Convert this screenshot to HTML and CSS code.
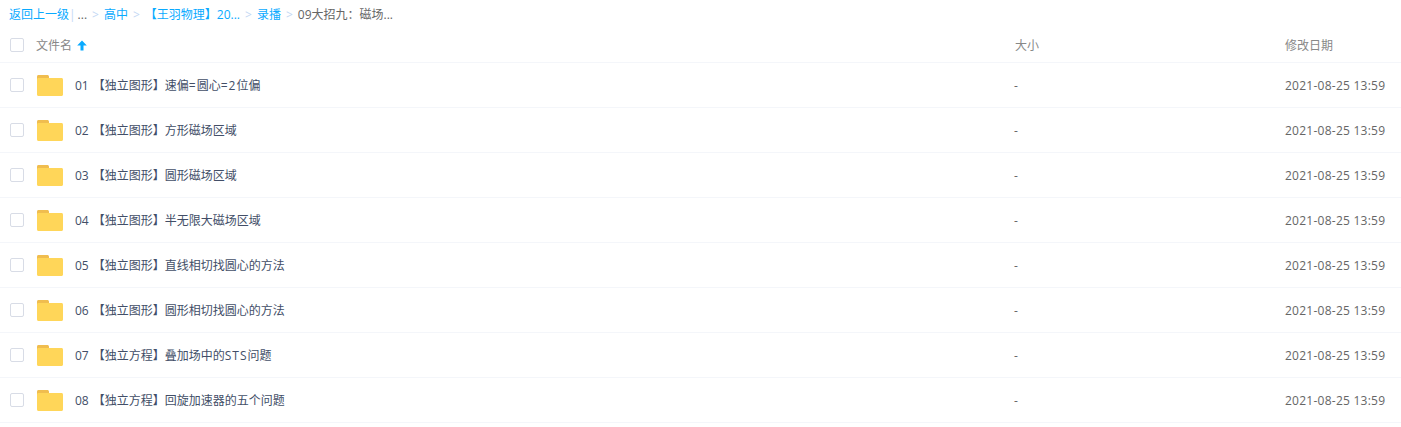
FILE: index.html

```html
<!DOCTYPE html>
<html lang="zh-CN">
<head>
  <meta charset="UTF-8" />
  <title>文件列表</title>
  <link rel="stylesheet" href="styles.css">
</head>
<body>

  <!-- 路径 -->
  <div class="crumbs">
    <a>返回上一级</a>
    <span class="crumb-bar">|</span>
    <span class="crumb-text">...</span>
    <span class="crumb-sep">&gt;</span>
    <a>高中</a>
    <span class="crumb-sep">&gt;</span>
    <a>【王羽物理】20...</a>
    <span class="crumb-sep">&gt;</span>
    <a>录播</a>
    <span class="crumb-sep">&gt;</span>
    <span class="crumb-text">09大招九：磁场...</span>
  </div>

  <!-- 表头 -->
  <div class="row head">
    <span class="check"></span>
    <div class="col-name">文件名
      <svg class="sort" width="10" height="11" viewBox="0 0 10 11"><path d="M5 .5 9.800 5.500H6.500V10.500H3.500V5.500H.2z" fill="#09aaff"/></svg>
    </div>
    <div class="col-size">大小</div>
    <div class="col-date">修改日期</div>
  </div>

  <!-- 文件行 -->
  <div class="row">
    <span class="check"></span>
    <svg class="folder" width="26" height="21" viewBox="0 0 26 21"><use href="#folder-shape"/></svg>
    <div class="col-name file-name"><span class="num">01</span>【独立图形】速偏<span class="wide">=</span>圆心<span class="wide">=2</span>位偏</div>
    <div class="col-size">-</div>
    <div class="col-date">2021-08-25 13:59</div>
  </div>
  <div class="row">
    <span class="check"></span>
    <svg class="folder" width="26" height="21" viewBox="0 0 26 21"><use href="#folder-shape"/></svg>
    <div class="col-name file-name"><span class="num">02</span>【独立图形】方形磁场区域</div>
    <div class="col-size">-</div>
    <div class="col-date">2021-08-25 13:59</div>
  </div>
  <div class="row">
    <span class="check"></span>
    <svg class="folder" width="26" height="21" viewBox="0 0 26 21"><use href="#folder-shape"/></svg>
    <div class="col-name file-name"><span class="num">03</span>【独立图形】圆形磁场区域</div>
    <div class="col-size">-</div>
    <div class="col-date">2021-08-25 13:59</div>
  </div>
  <div class="row">
    <span class="check"></span>
    <svg class="folder" width="26" height="21" viewBox="0 0 26 21"><use href="#folder-shape"/></svg>
    <div class="col-name file-name"><span class="num">04</span>【独立图形】半无限大磁场区域</div>
    <div class="col-size">-</div>
    <div class="col-date">2021-08-25 13:59</div>
  </div>
  <div class="row">
    <span class="check"></span>
    <svg class="folder" width="26" height="21" viewBox="0 0 26 21"><use href="#folder-shape"/></svg>
    <div class="col-name file-name"><span class="num">05</span>【独立图形】直线相切找圆心的方法</div>
    <div class="col-size">-</div>
    <div class="col-date">2021-08-25 13:59</div>
  </div>
  <div class="row">
    <span class="check"></span>
    <svg class="folder" width="26" height="21" viewBox="0 0 26 21"><use href="#folder-shape"/></svg>
    <div class="col-name file-name"><span class="num">06</span>【独立图形】圆形相切找圆心的方法</div>
    <div class="col-size">-</div>
    <div class="col-date">2021-08-25 13:59</div>
  </div>
  <div class="row">
    <span class="check"></span>
    <svg class="folder" width="26" height="21" viewBox="0 0 26 21"><use href="#folder-shape"/></svg>
    <div class="col-name file-name"><span class="num">07</span>【独立方程】叠加场中的<span class="wide">STS</span>问题</div>
    <div class="col-size">-</div>
    <div class="col-date">2021-08-25 13:59</div>
  </div>
  <div class="row">
    <span class="check"></span>
    <svg class="folder" width="26" height="21" viewBox="0 0 26 21"><use href="#folder-shape"/></svg>
    <div class="col-name file-name"><span class="num">08</span>【独立方程】回旋加速器的五个问题</div>
    <div class="col-size">-</div>
    <div class="col-date">2021-08-25 13:59</div>
  </div>

  <!-- 文件夹图标 -->
  <svg class="defs" width="0" height="0">
    <defs>
      <g id="folder-shape">
        <path d="M1.500 0H10C11.300 0 12 .6 12 2V5H0V1.500C0 .6.6 0 1.500 0z" fill="#f0bd4f"/>
        <path d="M1.500 3H24.500C25.400 3 26 3.600 26 4.500V19.500C26 20.400 25.400 21 24.500 21H1.500C.6 21 0 20.400 0 19.500V4.500C0 3.600.6 3 1.500 3z" fill="#ffd659"/>
      </g>
    </defs>
  </svg>

</body>
</html>
```

FILE: styles.css

```css
body {
  margin: 0;
  background: #fff;
  font-family: "Open Sans", "Noto Sans CJK SC", sans-serif;
  font-size: 12px;
  color: #666;
  overflow: hidden;
}

/* 路径 */
.crumbs {
  display: flex;
  align-items: center;
  height: 28px;
  padding-left: 9px;
  white-space: nowrap;
}
.crumbs a {
  color: #09aaff;
}
.crumb-bar {
  color: #c4d8f4;
  margin-right: 2px;
}
.crumb-text {
  color: #666;
}
.crumb-sep {
  color: #c4d8f4;
  margin: 0 5px;
}

/* 行 */
.row {
  display: flex;
  align-items: center;
  height: 44px;
  border-bottom: 1px solid #f4f6fa;
}
.head {
  height: 34px;
  color: #888;
}
.check {
  flex: none;
  width: 12px;
  height: 12px;
  margin-left: 10px;
  border: 1px solid #d8dce6;
  border-radius: 2px;
}
.folder {
  flex: none;
  margin-left: 13px;
}
.col-name {
  flex: 1;
  display: flex;
  align-items: center;
  gap: 5px;
  margin-left: 12px;
}
.file-name {
  display: block;
  color: #424e67;
}
.num {
  margin-right: 4px;
}
.wide {
  letter-spacing: 1px;
}
.col-size {
  flex: none;
  width: 271px;
}
.head .col-size {
  width: 270px;
  margin-left: 1px;
}
.col-date {
  flex: none;
  width: 116px;
  letter-spacing: 0.25px;
}
.head .col-date {
  letter-spacing: 0;
}
.defs {
  position: absolute;
}
```
